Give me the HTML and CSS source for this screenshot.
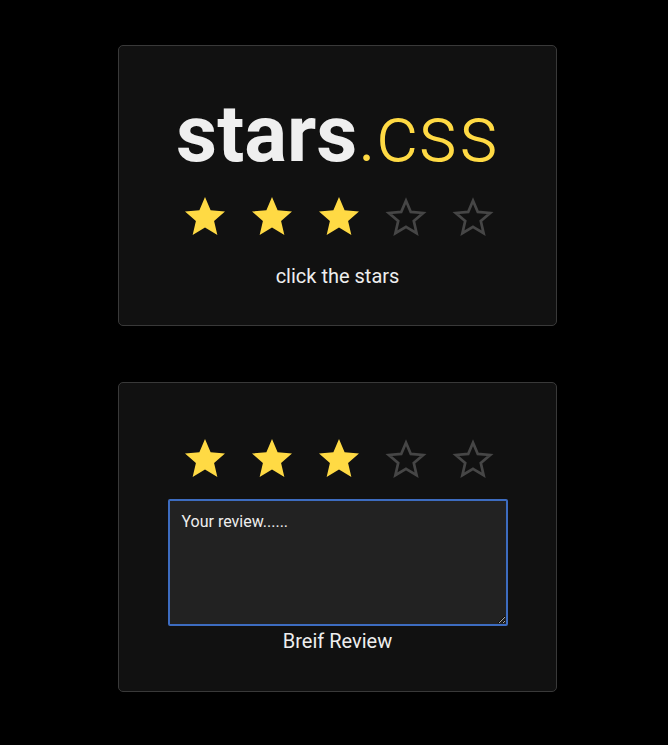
FILE: index.html
```html
<!DOCTYPE html>
<html lang="en">
<head>
<meta charset="utf-8">
<title>stars.css</title>
<link rel="stylesheet" href="styles.css">
</head>
<body>
<main class="page">
  <section class="card card-intro">
    <h1 class="title"><span class="title-main">stars</span><span class="title-ext">.css</span></h1>
    <div class="stars">
      <svg class="star on" viewBox="1.5 1.5 21 20"><path d="M12 17.27L18.18 21l-1.64-7.03L22 9.24l-7.19-.61L12 2 9.19 8.630 2 9.24l5.46 4.73L5.82 21z"/></svg>
      <svg class="star on" viewBox="1.5 1.5 21 20"><path d="M12 17.27L18.18 21l-1.64-7.03L22 9.24l-7.19-.61L12 2 9.19 8.63 2 9.24l5.46 4.73L5.82 21z"/></svg>
      <svg class="star on" viewBox="1.5 1.5 21 20"><path d="M12 17.27L18.18 21l-1.64-7.03L22 9.24l-7.19-.61L12 2 9.19 8.63 2 9.24l5.46 4.73L5.82 21z"/></svg>
      <svg class="star off" viewBox="1.5 1.5 21 20"><path d="M12 16.9L17.3 20.1l-1.4-6.05L20.6 10l-6.2-.53L12 3.8 9.6 9.47 3.4 10l4.7 4.05L6.7 20.1z"/></svg>
      <svg class="star off" viewBox="1.5 1.5 21 20"><path d="M12 16.9L17.3 20.1l-1.4-6.05L20.6 10l-6.2-.53L12 3.8 9.6 9.47 3.4 10l4.7 4.05L6.7 20.1z"/></svg>
    </div>
    <p class="caption caption-intro">click the stars</p>
  </section>

  <section class="card card-review">
    <div class="stars">
      <svg class="star on" viewBox="1.5 1.5 21 20"><path d="M12 17.27L18.18 21l-1.64-7.03L22 9.24l-7.19-.61L12 2 9.19 8.63 2 9.24l5.46 4.73L5.82 21z"/></svg>
      <svg class="star on" viewBox="1.5 1.5 21 20"><path d="M12 17.27L18.18 21l-1.64-7.03L22 9.24l-7.19-.61L12 2 9.19 8.63 2 9.24l5.46 4.73L5.82 21z"/></svg>
      <svg class="star on" viewBox="1.5 1.5 21 20"><path d="M12 17.27L18.18 21l-1.64-7.03L22 9.24l-7.19-.61L12 2 9.19 8.63 2 9.24l5.46 4.73L5.82 21z"/></svg>
      <svg class="star off" viewBox="1.5 1.5 21 20"><path d="M12 16.9L17.3 20.1l-1.4-6.05L20.6 10l-6.2-.53L12 3.8 9.6 9.47 3.4 10l4.7 4.05L6.7 20.1z"/></svg>
      <svg class="star off" viewBox="1.5 1.5 21 20"><path d="M12 16.9L17.3 20.1l-1.4-6.05L20.6 10l-6.2-.53L12 3.8 9.6 9.47 3.4 10l4.7 4.05L6.7 20.1z"/></svg>
    </div>
    <textarea class="review" id="review">Your review......</textarea>
    <label class="caption caption-review" for="review">Breif Review</label>
  </section>
</main>
</body>
</html>
```

FILE: styles.css
```css
html, body {
  margin: 0;
  padding: 0;
  background: #000;
}

body {
  font-family: Roboto, "Liberation Sans", sans-serif;
  color: #eeeeee;
}

.page {
  display: flex;
  flex-direction: column;
  align-items: center;
  gap: 56px;
  padding: 45px 0 0 7px;
}

.card {
  box-sizing: border-box;
  width: 439px;
  background: #111111;
  border: 1px solid #393939;
  border-radius: 5px;
  display: flex;
  flex-direction: column;
  align-items: center;
}

.card-intro {
  padding: 48px 0 37px;
}

.card-review {
  padding: 55px 0 38px;
}

.title {
  margin: 0;
  font-size: 80px;
  line-height: 80px;
  letter-spacing: 0;
  white-space: nowrap;
}

.title-main {
  font-weight: 700;
  color: #efefef;
}

.title-ext {
  font-weight: 300;
  color: #ffda44;
}

.stars {
  display: flex;
  gap: 25px;
  padding-left: 3px;
}

.card-intro .stars {
  margin-top: 22px;
}

.star {
  width: 42px;
  height: 40px;
  display: block;
}

.star.on path {
  fill: #ffda44;
}

.star.off path {
  fill: none;
  stroke: #464646;
  stroke-width: 1.35;
  stroke-linejoin: miter;
}

.caption {
  display: block;
  margin: 0;
  font-size: 20px;
  line-height: 24px;
  color: #eeeeee;
}

.caption-intro {
  margin-top: 28px;
}

.review {
  display: block;
  box-sizing: border-box;
  width: 340px;
  height: 127px;
  margin-top: 21px;
  padding: 11px 12px;
  background: #222222;
  border: 2px solid #3d6cc0;
  border-radius: 2px;
  outline: none;
  color: #eeeeee;
  font-family: Roboto, "Liberation Sans", sans-serif;
  font-size: 16px;
  line-height: 19px;
  resize: both;
}

.caption-review {
  margin-top: 3px;
}
```
